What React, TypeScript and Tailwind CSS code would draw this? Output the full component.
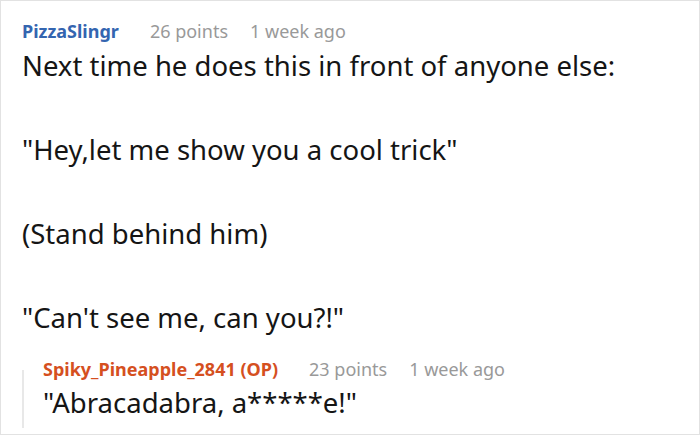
import React from 'react';

const font = { fontFamily: '"Noto Sans", "Open Sans", sans-serif' };

const Meta: React.FC<{ name: string; points: number; time: string; nameClass: string }> = ({
  name,
  points,
  time,
  nameClass,
}) => (
  <div className="flex items-baseline text-[18px] leading-[24px]">
    <span className={`font-bold ${nameClass}`}>{name}</span>
    <span className="ml-[31px] text-[#999999]">{points} points</span>
    <span className="ml-[22px] text-[#999999]">{time}</span>
  </div>
);

export default function App() {
  const lines = [
    'Next time he does this in front of anyone else:',
    '"Hey,let me show you a cool trick"',
    '(Stand behind him)',
    '"Can\'t see me, can you?!"',
  ];

  return (
    <div className="w-[700px] h-[436px] bg-white" style={font}>
      <div className="w-[700px] h-[435px] border border-[#e2e2e2] pl-[21px] pt-[18px]">
        <Meta name="PizzaSlingr" points={26} time="1 week ago" nameClass="text-[#3465b0]" />
        <div className="mt-[2px] flex flex-col gap-[42px] text-[27.5px] leading-[42px] text-[#151515]">
          {lines.map((l) => (
            <p key={l}>{l}</p>
          ))}
        </div>
        <div className="mt-[18px] flex">
          <div className="mt-[13px] h-[58px] w-[2px] bg-[#e8e8e8]" />
          <div className="pl-[19px]">
            <Meta
              name="Spiky_Pineapple_2841 (OP)"
              points={23}
              time="1 week ago"
              nameClass="text-[#d5501f]"
            />
            <p className="mt-[5px] text-[27.5px] leading-[34px] text-[#151515]">"Abracadabra, a*****e!"</p>
          </div>
        </div>
      </div>
    </div>
  );
}
